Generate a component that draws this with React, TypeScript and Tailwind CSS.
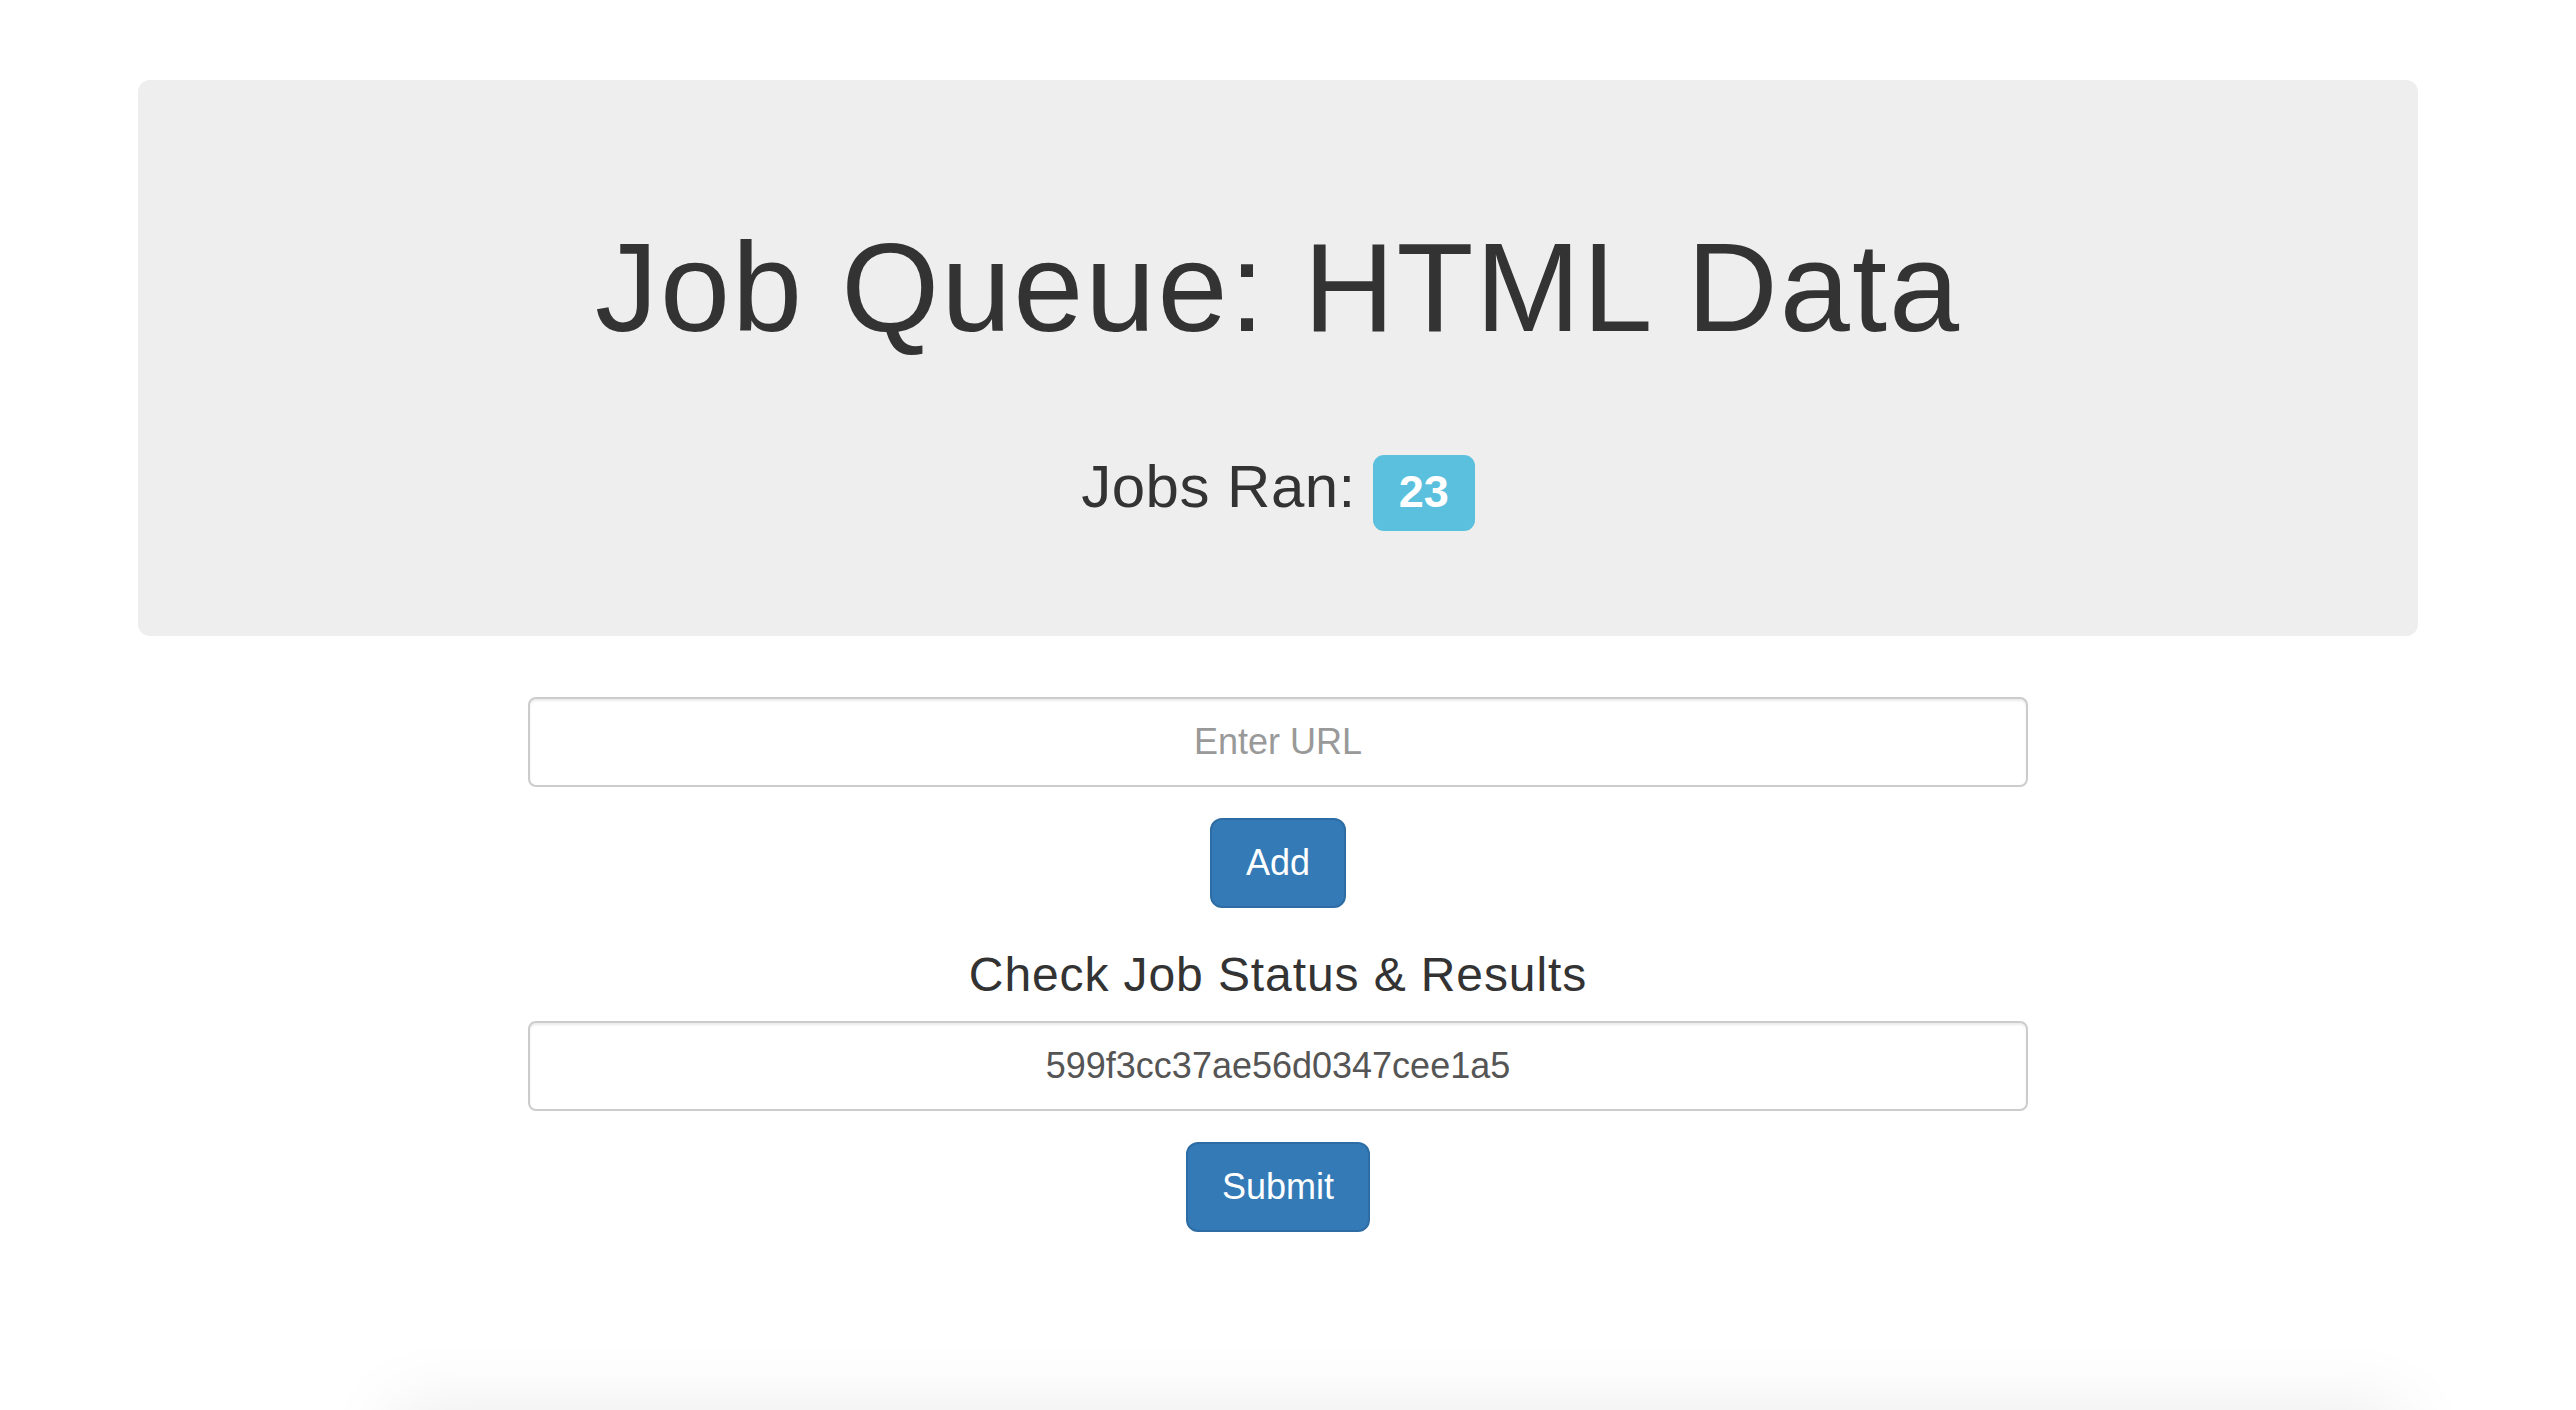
import React, { useState } from "react";

const App: React.FC = () => {
  const [url, setUrl] = useState("");
  const [jobId, setJobId] = useState("599f3cc37ae56d0347cee1a5");

  return (
    <div className="h-[1410px] w-full overflow-hidden bg-white font-['Liberation_Sans',Arial,sans-serif] text-[#333]">
      <div className="flex w-[2556px] flex-col items-center pt-[80px]">
        {/* jumbotron */}
        <div className="flex h-[556px] w-[2280px] flex-col items-center rounded-[12px] bg-[#eeeeee] pt-[139px]">
          <h1 className="text-[126px] leading-[1.1] font-normal tracking-[2px]">Job Queue: HTML Data</h1>
          <h2 className="mt-[96px] flex items-baseline text-[60px] leading-[1.1] font-normal tracking-[0.5px]">
            Jobs Ran:
            <span className="ml-[17px] inline-block rounded-[11px] bg-[#5bc0de] px-[26px] pt-[14px] pb-[17px] text-[45px] leading-none font-bold tracking-normal text-white">
              23
            </span>
          </h2>
        </div>

        {/* add job */}
        <input
          type="text"
          placeholder="Enter URL"
          value={url}
          onChange={(e) => setUrl(e.target.value)}
          className="mt-[61px] h-[90px] w-[1500px] rounded-[8px] border-2 border-[#ccc] bg-white px-[32px] text-center text-[36px] text-[#555] shadow-[inset_0_2px_2px_rgba(0,0,0,0.075)] outline-none placeholder:text-[#999]"
        />
        <button className="mt-[31px] h-[90px] rounded-[12px] border-2 border-[#2e6da4] bg-[#337ab7] px-[34px] text-[36px] leading-[1.333] text-white">
          Add
        </button>

        {/* check status */}
        <h3 className="mt-[41px] text-[48px] leading-[1.1] font-normal tracking-[0.9px]">Check Job Status &amp; Results</h3>
        <input
          type="text"
          value={jobId}
          onChange={(e) => setJobId(e.target.value)}
          className="mt-[19px] h-[90px] w-[1500px] rounded-[8px] border-2 border-[#ccc] bg-white px-[32px] text-center text-[36px] text-[#555] shadow-[inset_0_2px_2px_rgba(0,0,0,0.075)] outline-none"
        />
        <button className="mt-[31px] h-[90px] rounded-[12px] border-2 border-[#2e6da4] bg-[#337ab7] px-[34px] text-[36px] leading-[1.333] text-white">
          Submit
        </button>

        {/* results panel just below the fold */}
        <div className="mt-[185px] ml-[240px] h-[200px] w-[1990px] bg-white shadow-[0_0_70px_10px_rgba(0,0,0,0.08)]"></div>
      </div>
    </div>
  );
};

export default App;
